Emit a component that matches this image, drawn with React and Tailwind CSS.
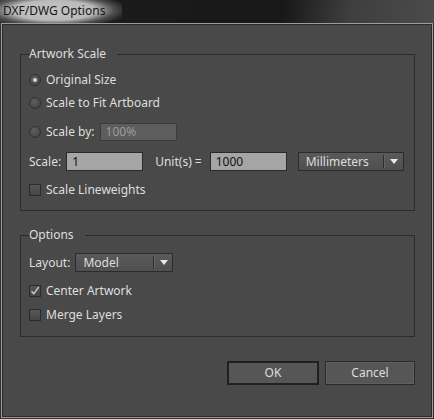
import React from "react";

const font = "font-['Noto_Sans','Open_Sans',sans-serif]";

function Radio({ checked }) {
  return (
    <span className="w-[12px] h-[12px] rounded-full border border-[#2f2f2f] bg-[radial-gradient(circle_at_40%_35%,#5e5e5e,#3f3f3f)] flex items-center justify-center shrink-0">
      {checked && <span className="w-[4px] h-[4px] rounded-full bg-[#d8d8d8]" />}
    </span>
  );
}

function Check({ checked }) {
  return (
    <span className="w-[12px] h-[12px] border border-[#2b2b2b] bg-[linear-gradient(#575757,#454545)] flex items-center justify-center shrink-0">
      {checked && (
        <svg width="10" height="10" viewBox="0 0 10 10">
          <path d="M1.5 5.2 L3.8 7.8 L8.6 1.2" fill="none" stroke="#d6d6d6" strokeWidth="1.3" />
        </svg>
      )}
    </span>
  );
}

function Arrow() {
  return (
    <svg width="8" height="5" viewBox="0 0 8 5">
      <path d="M0 0 L8 0 L4 5 Z" fill="#e8e8e8" />
    </svg>
  );
}

export default function App() {
  return (
    <div className={`w-[434px] h-[419px] bg-[#4a4a4a] text-[12px] leading-[16px] text-[#dedede] ${font} overflow-hidden`}>
      {/* title bar */}
      <div className="h-[23px] bg-[linear-gradient(100deg,#2a2a2a_0%,#1a1a1a_30%,#181818_65%,#3e3e3e_80%,#4b4b4b_100%)] flex items-stretch">
        <span className="w-[122px] pl-[3px] pb-[2px] flex items-center text-[#161616] bg-[radial-gradient(ellipse_62%_78%_at_44%_45%,#c4c4c4_0%,#bababa_55%,rgba(110,110,110,0.6)_80%,rgba(30,30,30,0)_100%)]">
          DXF/DWG Options
        </span>
      </div>
      {/* frame */}
      <div className="h-[396px] border border-t-0 border-[#303030]">
        <div className="h-full border border-[#9c9c9c]">
          <div className="h-full border border-[#2a2a2a] bg-[#494949] pt-[21px] pl-[17px] pr-[16px] flex flex-col">
            {/* Artwork Scale */}
            <fieldset className="border border-[#2c2c2c] m-0 p-0 pl-[8px] pb-[10px]">
              <legend className="ml-[5px] px-[3px] leading-[16px] -translate-x-[8px]">Artwork Scale</legend>
              <div className="flex flex-col">
                <div className="mt-[8px] h-[20px] flex items-center">
                  <Radio checked />
                  <span className="ml-[5px]">Original Size</span>
                </div>
                <div className="mt-[3px] h-[20px] flex items-center">
                  <Radio />
                  <span className="ml-[5px]">Scale to Fit Artboard</span>
                </div>
                <div className="mt-[10px] h-[18px] flex items-center">
                  <Radio />
                  <span className="ml-[5px]">Scale by:</span>
                  <span className="ml-[5px] w-[77px] h-[18px] border border-[#3b3b3b] bg-[#5d5d5d] text-[#9c9c9c] pl-[5px] flex items-center">100%</span>
                </div>
                <div className="mt-[11px] h-[19px] flex items-center">
                  <span>Scale:</span>
                  <span className="ml-[5px] w-[77px] h-[19px] border border-[#2a2a2a] bg-[#a5a5a5] text-[#111] pl-[5px] flex items-center">1</span>
                  <span className="ml-[12px]">Unit(s) =</span>
                  <span className="ml-[8px] w-[77px] h-[19px] border border-[#2a2a2a] bg-[#a5a5a5] text-[#111] pl-[5px] flex items-center">1000</span>
                  <span className="ml-[11px] w-[106px] h-[19px] border border-[#2b2b2b] bg-[linear-gradient(#5a5a5a,#4f4f4f)] flex items-center">
                    <span className="pl-[7px] flex-1">Millimeters</span>
                    <span className="w-[1px] h-[13px] bg-[#2e2e2e] border-r border-[#646464] box-content" />
                    <span className="w-[18px] flex items-center justify-center">
                      <Arrow />
                    </span>
                  </span>
                </div>
                <div className="mt-[9px] h-[20px] flex items-center">
                  <Check />
                  <span className="ml-[5px]">Scale Lineweights</span>
                </div>
              </div>
            </fieldset>
            {/* Options */}
            <fieldset className="mt-[16px] border border-[#2c2c2c] m-0 p-0 pl-[8px] pb-[11px]">
              <legend className="ml-[5px] px-[3px] leading-[16px] -translate-x-[8px]">Options</legend>
              <div className="flex flex-col">
                <div className="mt-[10px] h-[19px] flex items-center">
                  <span>Layout:</span>
                  <span className="ml-[5px] w-[98px] h-[19px] border border-[#2b2b2b] bg-[linear-gradient(#5a5a5a,#4f4f4f)] flex items-center">
                    <span className="pl-[7px] flex-1">Model</span>
                    <span className="w-[1px] h-[13px] bg-[#2e2e2e] border-r border-[#646464] box-content" />
                    <span className="w-[17px] flex items-center justify-center">
                      <Arrow />
                    </span>
                  </span>
                </div>
                <div className="mt-[9px] h-[20px] flex items-center">
                  <Check checked />
                  <span className="ml-[5px]">Center Artwork</span>
                </div>
                <div className="mt-[4px] h-[20px] flex items-center">
                  <Check />
                  <span className="ml-[5px]">Merge Layers</span>
                </div>
              </div>
            </fieldset>
            {/* buttons */}
            <div className="mt-[24px] flex justify-end gap-[6px]">
              <button className="w-[92px] h-[24px] border-2 border-[#202020] bg-[#565656] text-[#dedede] flex items-center justify-center">
                OK
              </button>
              <button className="w-[90px] h-[24px] border border-[#2b2b2b] bg-[#565656] shadow-[inset_0_0_0_1px_#5f5f5f] text-[#dedede] flex items-center justify-center">
                Cancel
              </button>
            </div>
          </div>
        </div>
      </div>
    </div>
  );
}
